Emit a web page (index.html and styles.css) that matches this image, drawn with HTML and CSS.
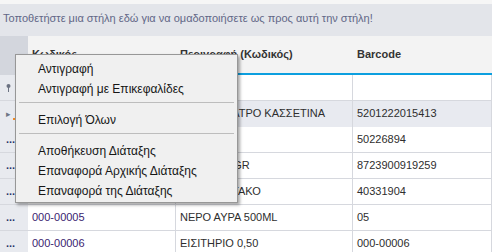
FILE: index.html
```html
<!DOCTYPE html>
<html lang="el">
<head>
  <meta charset="UTF-8">
  <title>Είδη</title>
  <link rel="stylesheet" href="styles.css">
</head>
<body>

  <div class="top-strip"></div>

  <!-- Περιοχή ομαδοποίησης -->
  <div class="group-panel">Τοποθετήστε μια στήλη εδώ για να ομαδοποιήσετε ως προς αυτή την στήλη!</div>

  <div class="grid">
    <div class="row head">
      <div class="ind"></div>
      <div class="cell">Κωδικός</div>
      <div class="cell">Περιγραφή (Κωδικός)</div>
      <div class="cell">Barcode</div>
    </div>

    <div class="row filter">
      <div class="ind">
        <svg width="5" height="8" viewBox="0 0 5 8"><circle cx="2.5" cy="2" r="2" fill="#6b7282"/><rect x="2" y="3" width="1" height="5" fill="#6b7282"/></svg>
      </div>
      <div class="cell"></div>
      <div class="cell"></div>
      <div class="cell"></div>
    </div>

    <div class="row focused">
      <div class="ind"><span class="arrow">&#9656;</span><span class="edit"></span></div>
      <div class="cell code"></div>
      <div class="cell">ΚΑΦΕΣ ΦΙΛΤΡΟ ΚΑΣΣΕΤΙΝΑ</div>
      <div class="cell">5201222015413</div>
    </div>
    <div class="row">
      <div class="ind">...</div>
      <div class="cell code"></div>
      <div class="cell">ΤΣΙΧΛΕΣ</div>
      <div class="cell">50226894</div>
    </div>
    <div class="row">
      <div class="ind">...</div>
      <div class="cell code"></div>
      <div class="cell">ΖΑΧΑΡΗ 1GR</div>
      <div class="cell">8723900919259</div>
    </div>
    <div class="row">
      <div class="ind">...</div>
      <div class="cell code"></div>
      <div class="cell">ΓΑΛΑ ΚΟΥΤΑΚΟ</div>
      <div class="cell">40331904</div>
    </div>
    <div class="row">
      <div class="ind">...</div>
      <div class="cell code">000-00005</div>
      <div class="cell">ΝΕΡΟ ΑΥΡΑ 500ML</div>
      <div class="cell">05</div>
    </div>
    <div class="row">
      <div class="ind">...</div>
      <div class="cell code">000-00006</div>
      <div class="cell">ΕΙΣΙΤΗΡΙΟ 0,50</div>
      <div class="cell">000-00006</div>
    </div>
  </div>

  <!-- Μενού δεξιού κλικ -->
  <ul class="context-menu">
    <li>Αντιγραφή</li>
    <li>Αντιγραφή με Επικεφαλίδες</li>
    <li class="sep"></li>
    <li>Επιλογή Όλων</li>
    <li class="sep"></li>
    <li>Αποθήκευση Διάταξης</li>
    <li>Επαναφορά Αρχικής Διάταξης</li>
    <li>Επαναφορά της Διάταξης</li>
  </ul>

</body>
</html>
```

FILE: styles.css
```css
body {
  margin: 0;
  font-family: "Liberation Sans", Arial, sans-serif;
  font-size: 11px;
  color: #2e2e2e;
  background: #fff;
  overflow: hidden;
}

.top-strip {
  height: 4px;
  background: #f6f6f6;
}

.group-panel {
  height: 32px;
  line-height: 29px;
  padding-left: 3px;
  background: #e3e5ea;
  color: #626787;
  white-space: nowrap;
}

.grid {
  width: 492px;
  overflow: hidden;
}

.row {
  display: grid;
  grid-template-columns: 28px 148px 177px 1fr;
  height: 26px;
  box-sizing: border-box;
  border-bottom: 1px solid #d6d8de;
}

.cell {
  padding-left: 4px;
  line-height: 25px;
  white-space: nowrap;
  overflow: hidden;
  border-right: 1px solid #d6d8de;
}

.ind {
  background: #e8eaef;
  color: #27346b;
  font-weight: bold;
  line-height: 25px;
  padding-left: 6px;
  position: relative;
}

.head {
  height: 39px;
  background: #f3f3f3;
  border-bottom: 2px solid #0c9fdf;
}

.head .cell {
  font-weight: bold;
  line-height: 37px;
  border-right: none;
  color: #333;
}

.head .ind {
  background: #d3d6dd;
  margin-bottom: -2px;
}

.filter .ind {
  display: flex;
  align-items: center;
}

.focused .cell {
  background: #e8eaf0;
}

.arrow {
  color: #6e7686;
  font-size: 9px;
  font-weight: normal;
}

.edit {
  position: absolute;
  left: 13px;
  top: 17px;
  width: 2px;
  height: 2px;
  background: #f08a24;
}

.code {
  color: #3b2470;
}

.context-menu {
  position: absolute;
  left: 15px;
  top: 54px;
  width: 223px;
  box-sizing: border-box;
  margin: 0;
  padding: 4px 2px 1px;
  list-style: none;
  background: #f0f0f0;
  border: 1px solid #979797;
  box-shadow: 2px 2px 3px rgba(0, 0, 0, 0.35);
  font-size: 12px;
  color: #161616;
}

.context-menu li {
  height: 20px;
  line-height: 20px;
  padding-left: 20px;
}

.context-menu .sep {
  height: 1px;
  margin: 3px 1px 7px;
  padding: 0;
  background: #bdbdbd;
}
```
